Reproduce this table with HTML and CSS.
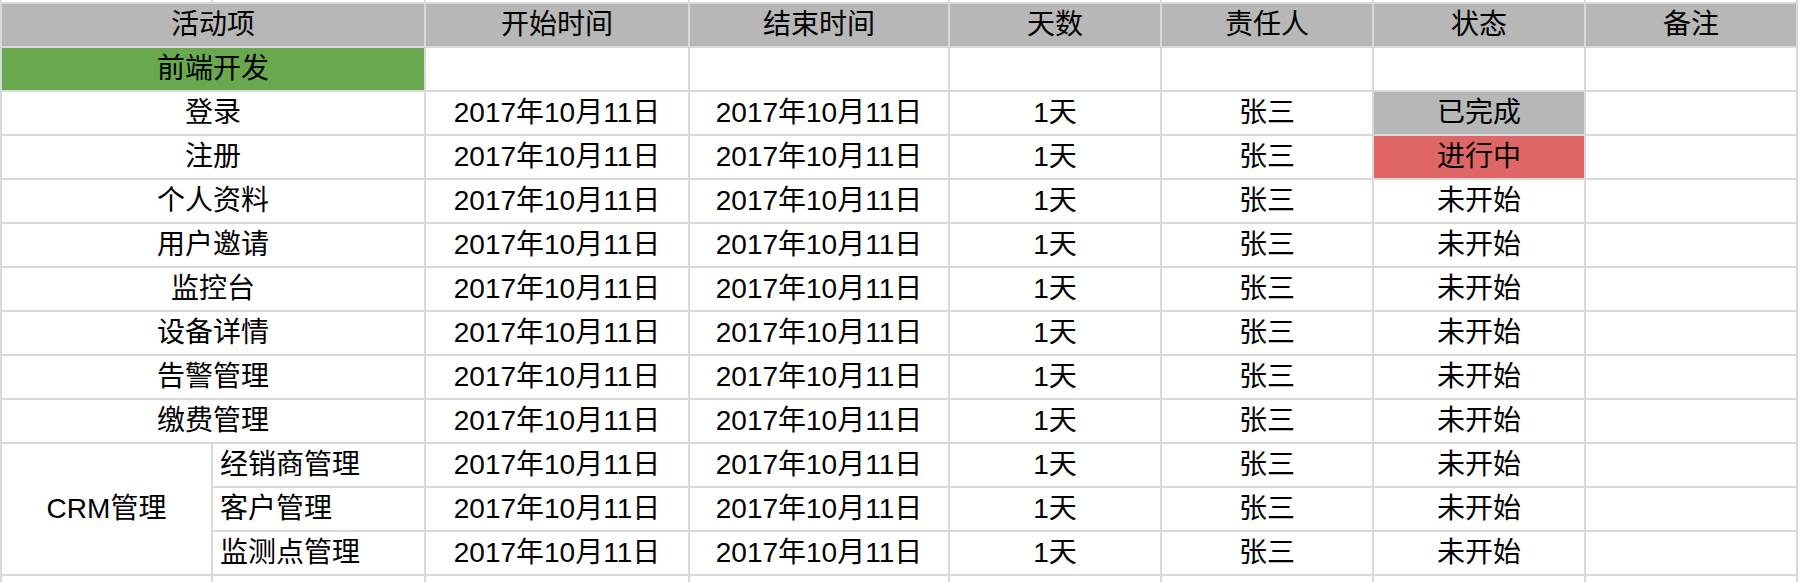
FILE: index.html
```html
<!DOCTYPE html>
<html lang="zh-CN">
<head>
<meta charset="utf-8">
<title>活动项</title>
<link rel="stylesheet" href="styles.css">
</head>
<body>
<div class="sheet">
  <div class="c"></div><div class="c"></div><div class="c"></div><div class="c"></div><div class="c"></div><div class="c"></div><div class="c"></div><div class="c"></div>

  <div class="c h span2">活动项</div><div class="c h">开始时间</div><div class="c h">结束时间</div><div class="c h">天数</div><div class="c h">责任人</div><div class="c h">状态</div><div class="c h">备注</div>

  <div class="c span2 green">前端开发</div><div class="c"></div><div class="c"></div><div class="c"></div><div class="c"></div><div class="c"></div><div class="c"></div>

  <div class="c span2">登录</div><div class="c">2017年10月11日</div><div class="c">2017年10月11日</div><div class="c">1天</div><div class="c">张三</div><div class="c done">已完成</div><div class="c"></div>
  <div class="c span2">注册</div><div class="c">2017年10月11日</div><div class="c">2017年10月11日</div><div class="c">1天</div><div class="c">张三</div><div class="c doing">进行中</div><div class="c"></div>
  <div class="c span2">个人资料</div><div class="c">2017年10月11日</div><div class="c">2017年10月11日</div><div class="c">1天</div><div class="c">张三</div><div class="c">未开始</div><div class="c"></div>
  <div class="c span2">用户邀请</div><div class="c">2017年10月11日</div><div class="c">2017年10月11日</div><div class="c">1天</div><div class="c">张三</div><div class="c">未开始</div><div class="c"></div>
  <div class="c span2">监控台</div><div class="c">2017年10月11日</div><div class="c">2017年10月11日</div><div class="c">1天</div><div class="c">张三</div><div class="c">未开始</div><div class="c"></div>
  <div class="c span2">设备详情</div><div class="c">2017年10月11日</div><div class="c">2017年10月11日</div><div class="c">1天</div><div class="c">张三</div><div class="c">未开始</div><div class="c"></div>
  <div class="c span2">告警管理</div><div class="c">2017年10月11日</div><div class="c">2017年10月11日</div><div class="c">1天</div><div class="c">张三</div><div class="c">未开始</div><div class="c"></div>
  <div class="c span2">缴费管理</div><div class="c">2017年10月11日</div><div class="c">2017年10月11日</div><div class="c">1天</div><div class="c">张三</div><div class="c">未开始</div><div class="c"></div>

  <div class="c rows3">CRM管理</div><div class="c left">经销商管理</div><div class="c">2017年10月11日</div><div class="c">2017年10月11日</div><div class="c">1天</div><div class="c">张三</div><div class="c">未开始</div><div class="c"></div>
  <div class="c left">客户管理</div><div class="c">2017年10月11日</div><div class="c">2017年10月11日</div><div class="c">1天</div><div class="c">张三</div><div class="c">未开始</div><div class="c"></div>
  <div class="c left">监测点管理</div><div class="c">2017年10月11日</div><div class="c">2017年10月11日</div><div class="c">1天</div><div class="c">张三</div><div class="c">未开始</div><div class="c"></div>

  <div class="c"></div><div class="c"></div><div class="c"></div><div class="c"></div><div class="c"></div><div class="c"></div><div class="c"></div><div class="c"></div>
</div>
</body>
</html>
```

FILE: styles.css
```css
html, body {
  margin: 0;
  padding: 0;
  background: #ffffff;
}

body {
  width: 1800px;
  height: 582px;
  overflow: hidden;
  font-family: "Liberation Sans", "Noto Sans CJK SC", sans-serif;
  font-size: 28px;
  color: #000000;
}

.sheet {
  width: 1794px;
  display: grid;
  grid-template-columns: 209px 211px 262px 258px 210px 210px 210px 210px;
  grid-template-rows: 2px repeat(13, 42px) 6px;
  gap: 2px;
  padding: 0 2px;
  background: #d9d9d9;
}

.c {
  background: #ffffff;
  display: flex;
  align-items: center;
  justify-content: center;
  white-space: nowrap;
  overflow: hidden;
  line-height: 1;
}

.span2 {
  grid-column: span 2;
}

.rows3 {
  grid-row: span 3;
}

.left {
  justify-content: flex-start;
  padding-left: 7px;
}

.h {
  background: #b7b7b7;
}

.green {
  background: #6aa84f;
}

.done {
  background: #b7b7b7;
}

.doing {
  background: #e06666;
}
```
